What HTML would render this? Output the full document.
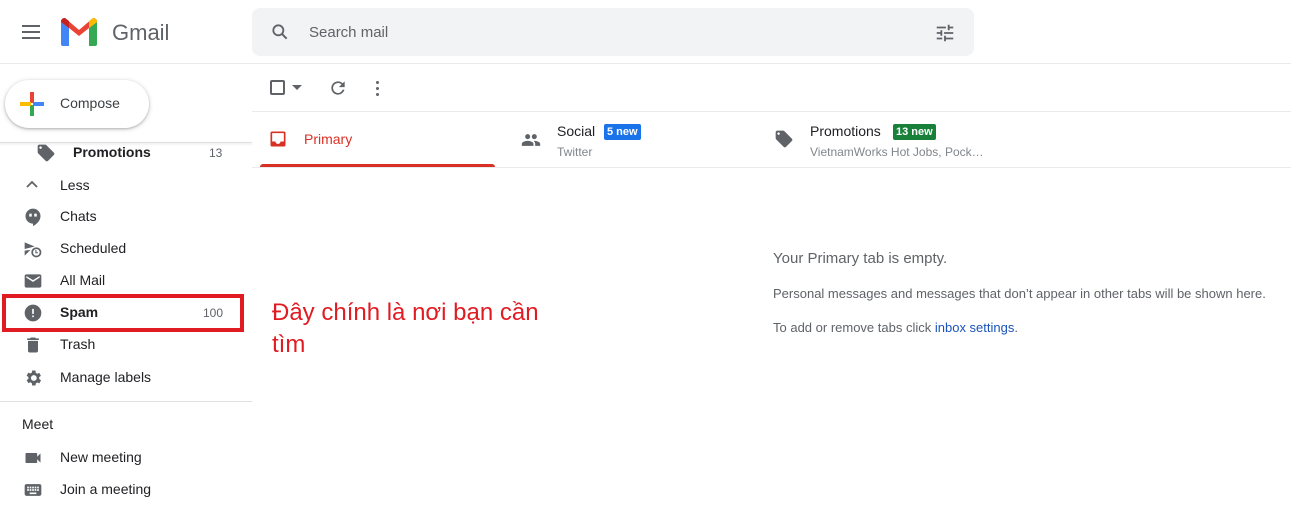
<!DOCTYPE html>
<html><head><meta charset="utf-8"><style>
*{margin:0;padding:0;box-sizing:border-box}
body{width:1291px;height:506px;overflow:hidden;background:#fff;font-family:"Liberation Sans",Arial,sans-serif;color:#202124;position:relative}
.a{position:absolute}
.nav{font-size:14px;color:#202124;left:60px}
.ic{position:absolute;left:23px}
</style></head><body>
<!-- header -->
<div class="a" style="left:22px;top:25px;width:18px;height:2px;background:#5f6368;box-shadow:0 6px 0 #5f6368,0 12px 0 #5f6368"></div>
<svg class="a" style="left:61px;top:18px" width="36" height="28" viewBox="0 0 36 28">
<path d="M0 4 L0 26 Q0 28 2 28 L8 28 L8 10 Z" fill="#4285f4"/>
<path d="M28 10 L28 28 L34 28 Q36 28 36 26 L36 4 Z" fill="#34a853"/>
<path d="M0 4 Q0 0 4 0 L18 12 L32 0 Q36 0 36 4 L28 10 L18 18 L8 10 Z" fill="#ea4335"/>
<path d="M28 10 L36 4 Q36 0 32 0 L28 3Z" fill="#fbbc04"/>
<path d="M0 4 L8 10 L8 3 L4 0 Q0 0 0 4Z" fill="#c5221f"/>
</svg>
<div class="a" style="left:112px;top:20px;font-size:22px;color:#5f6368">Gmail</div>
<div class="a" style="left:252px;top:8px;width:722px;height:48px;background:#f1f3f4;border-radius:8px"></div>
<svg class="a" style="left:270px;top:22px" width="20" height="20" viewBox="0 0 24 24"><circle cx="10" cy="10" r="6" fill="none" stroke="#5f6368" stroke-width="2.2"/><path d="M14.5 14.5 L20 20" stroke="#5f6368" stroke-width="2.4"/></svg>
<div class="a" style="left:309px;top:24px;font-size:15px;color:#5f6368">Search mail</div>
<svg class="a" style="left:934px;top:22px" width="22" height="22" viewBox="0 0 24 24" fill="#5f6368"><path d="M3 17v2h6v-2H3zM3 5v2h10V5H3zm10 16v-2h8v-2h-8v-2h-2v6h2zM7 9v2H3v2h4v2h2V9H7zm14 4v-2H11v2h10zm-6-4h2V7h4V5h-4V3h-2v6z"/></svg>
<div class="a" style="left:0;top:63px;width:1291px;height:1px;background:#e8eaed"></div>
<!-- compose -->
<div class="a" style="left:5px;top:80px;width:144px;height:48px;border-radius:24px;background:#fff;box-shadow:0 1px 2px rgba(60,64,67,.3),0 1px 4px 1px rgba(60,64,67,.15)"></div>
<svg class="a" style="left:19px;top:91px" width="26" height="26" viewBox="0 0 26 26"><rect x="11" y="1" width="4" height="11" fill="#ea4335"/><rect x="11" y="14" width="4" height="11" fill="#34a853"/><rect x="1" y="11" width="11" height="4" fill="#fbbc04"/><rect x="14" y="11" width="11" height="4" fill="#4285f4"/></svg>
<div class="a" style="left:60px;top:95px;font-size:14px;color:#3c4043">Compose</div>
<div class="a" style="left:0;top:142px;width:252px;height:1px;background:#e0e0e0;box-shadow:0 1px 2px rgba(0,0,0,.15)"></div>
<!-- nav -->
<svg class="a" style="left:36px;top:143px" width="20" height="20" viewBox="0 0 24 24" fill="#5f6368"><path d="M21.4 11.6l-9-9C12.1 2.2 11.6 2 11 2H4c-1.1 0-2 .9-2 2v7c0 .6.2 1.1.6 1.4l9 9c.4.4.9.6 1.4.6s1-.2 1.4-.6l7-7c.4-.4.6-.9.6-1.4s-.2-1-.6-1.4zM5.5 7C4.7 7 4 6.3 4 5.5S4.7 4 5.5 4 7 4.7 7 5.5 6.3 7 5.5 7z"/></svg>
<div class="a" style="left:73px;top:144px;font-size:14px;font-weight:bold">Promotions</div>
<div class="a" style="left:209px;top:146px;font-size:12px;color:#5f6368">13</div>
<svg class="a" style="left:25px;top:179px" width="14" height="10" viewBox="0 0 14 10"><path d="M2 8 L7 3 L12 8" fill="none" stroke="#5f6368" stroke-width="1.8"/></svg>
<div class="a nav" style="top:177px">Less</div>
<svg class="ic" style="top:207px" width="20" height="20" viewBox="0 0 24 24" fill="#5f6368"><path d="M12 2a9 9 0 0 0-9 9c0 5 4 9 9 9v3c5-2.5 9-7 9-12a9 9 0 0 0-9-9z"/><rect x="7.5" y="8" width="3" height="3.5" fill="#fff"/><rect x="13.5" y="8" width="3" height="3.5" fill="#fff"/></svg>
<div class="a nav" style="top:208px">Chats</div>
<svg class="ic" style="top:239px" width="20" height="20" viewBox="0 0 24 24" fill="#5f6368"><path d="M2 4 L14 9 L2 12Z"/><circle cx="16" cy="16" r="6"/><circle cx="16" cy="16" r="4" fill="#fff"/><path d="M15.5 13v3.5h2.5" stroke="#5f6368" stroke-width="1.3" fill="none"/><path d="M2 14 L9 13 L2 20Z"/></svg>
<div class="a nav" style="top:240px">Scheduled</div>
<svg class="ic" style="top:271px" width="20" height="20" viewBox="0 0 24 24" fill="#5f6368"><path d="M20 4H4c-1.1 0-2 .9-2 2v12c0 1.1.9 2 2 2h16c1.1 0 2-.9 2-2V6c0-1.1-.9-2-2-2zm0 4l-8 5-8-5V6l8 5 8-5v2z"/></svg>
<div class="a nav" style="top:272px">All Mail</div>
<svg class="ic" style="top:303px" width="20" height="20" viewBox="0 0 24 24" fill="#5f6368"><path d="M12 2a10 10 0 1 0 0 20 10 10 0 0 0 0-20zm1 15h-2v-2h2v2zm0-4h-2V7h2v6z"/></svg>
<div class="a nav" style="top:304px;font-weight:bold">Spam</div>
<div class="a" style="left:203px;top:306px;font-size:12px;color:#5f6368">100</div>
<div class="a" style="left:2px;top:294px;width:242px;height:38px;border:4px solid #e11b22"></div>
<svg class="ic" style="top:335px" width="20" height="20" viewBox="0 0 24 24" fill="#5f6368"><path d="M6 19c0 1.1.9 2 2 2h8c1.1 0 2-.9 2-2V7H6v12zM19 4h-3.5l-1-1h-5l-1 1H5v2h14V4z"/></svg>
<div class="a nav" style="top:336px">Trash</div>
<svg class="ic" style="top:368px" width="20" height="20" viewBox="0 0 24 24" fill="#5f6368"><path d="M19.4 13a7.5 7.5 0 0 0 0-2l2.1-1.6-2-3.5-2.5 1a7.3 7.3 0 0 0-1.7-1L15 3h-4l-.4 2.6a7.3 7.3 0 0 0-1.7 1l-2.5-1-2 3.5L6.5 11a7.5 7.5 0 0 0 0 2l-2.1 1.6 2 3.5 2.5-1c.5.4 1.1.7 1.7 1L11 21h4l.4-2.6c.6-.3 1.2-.6 1.7-1l2.5 1 2-3.5L19.4 13zM13 15.5a3.5 3.5 0 1 1 0-7 3.5 3.5 0 0 1 0 7z"/></svg>
<div class="a nav" style="top:369px">Manage labels</div>
<div class="a" style="left:0;top:401px;width:252px;height:1px;background:#e0e0e0"></div>
<div class="a" style="left:22px;top:416px;font-size:14px">Meet</div>
<svg class="ic" style="top:448px" width="20" height="20" viewBox="0 0 24 24" fill="#5f6368"><path d="M17 10.5V7c0-.6-.4-1-1-1H4c-.6 0-1 .4-1 1v10c0 .6.4 1 1 1h12c.6 0 1-.4 1-1v-3.5l4 4v-11l-4 4z"/></svg>
<div class="a nav" style="top:449px">New meeting</div>
<svg class="ic" style="top:480px" width="20" height="20" viewBox="0 0 24 24" fill="#5f6368"><path d="M20 5H4c-1.1 0-2 .9-2 2v10c0 1.1.9 2 2 2h16c1.1 0 2-.9 2-2V7c0-1.1-.9-2-2-2zm-9 3h2v2h-2V8zm0 3h2v2h-2v-2zM8 8h2v2H8V8zm0 3h2v2H8v-2zm-1 2H5v-2h2v2zm0-3H5V8h2v2zm9 7H8v-2h8v2zm0-4h-2v-2h2v2zm0-3h-2V8h2v2zm3 3h-2v-2h2v2zm0-3h-2V8h2v2z"/></svg>
<div class="a nav" style="top:481px">Join a meeting</div>
<!-- annotation -->
<div class="a" style="left:272px;top:297px;font-size:24px;line-height:32px;color:#e11b22;font-family:'Liberation Sans','DejaVu Sans',sans-serif">Đây chính là nơi bạn cần<br>tìm</div>
<!-- toolbar -->
<div class="a" style="left:270px;top:80px;width:15px;height:15px;border:2px solid #5f6368;border-radius:2px"></div>
<svg class="a" style="left:292px;top:85px" width="10" height="6"><path d="M0 0 L10 0 L5 5Z" fill="#5f6368"/></svg>
<svg class="a" style="left:328px;top:78px" width="20" height="20" viewBox="0 0 24 24" fill="#5f6368"><path d="M17.65 6.35A7.958 7.958 0 0 0 12 4a8 8 0 1 0 7.73 10h-2.08A6 6 0 1 1 12 6c1.66 0 3.14.69 4.22 1.78L13 11h7V4l-2.35 2.35z"/></svg>
<div class="a" style="left:376px;top:81px;width:3px;height:3px;background:#5f6368;border-radius:50%;box-shadow:0 6px 0 #5f6368,0 12px 0 #5f6368"></div>
<div class="a" style="left:252px;top:111px;width:1039px;height:1px;background:#e8eaed"></div>
<!-- tabs -->
<svg class="a" style="left:268px;top:129px" width="20" height="20" viewBox="0 0 24 24" fill="#d93025"><path d="M19 3H5a2 2 0 0 0-2 2v14a2 2 0 0 0 2 2h14a2 2 0 0 0 2-2V5a2 2 0 0 0-2-2zm0 12h-4a3 3 0 0 1-6 0H5V5h14v10z"/></svg>
<div class="a" style="left:304px;top:131px;font-size:14px;color:#d93025">Primary</div>
<div class="a" style="left:260px;top:164px;width:235px;height:4px;background:#d93025;border-radius:3px 3px 0 0"></div>
<svg class="a" style="left:520px;top:130px" width="22" height="20" viewBox="0 0 24 24" fill="#5f6368"><path d="M16 11c1.66 0 2.99-1.34 2.99-3S17.66 5 16 5s-3 1.34-3 3 1.34 3 3 3zm-8 0c1.66 0 2.99-1.34 2.99-3S9.66 5 8 5 5 6.34 5 8s1.34 3 3 3zm0 2c-2.33 0-7 1.17-7 3.5V19h14v-2.5C15 14.17 10.33 13 8 13zm8 0c-.29 0-.62.02-.97.05 1.16.84 1.97 1.97 1.97 3.45V19h6v-2.5c0-2.33-4.67-3.5-7-3.5z"/></svg>
<div class="a" style="left:557px;top:123px;font-size:14px;color:#202124">Social</div>
<div class="a" style="left:604px;top:124px;background:#1a73e8;color:#fff;font-size:11px;font-weight:bold;padding:1px 3px;border-radius:2px;line-height:14px">5 new</div>
<div class="a" style="left:557px;top:145px;font-size:12px;color:#80868b">Twitter</div>
<svg class="a" style="left:774px;top:129px" width="20" height="20" viewBox="0 0 24 24" fill="#5f6368"><path d="M21.4 11.6l-9-9C12.1 2.2 11.6 2 11 2H4c-1.1 0-2 .9-2 2v7c0 .6.2 1.1.6 1.4l9 9c.4.4.9.6 1.4.6s1-.2 1.4-.6l7-7c.4-.4.6-.9.6-1.4s-.2-1-.6-1.4zM5.5 7C4.7 7 4 6.3 4 5.5S4.7 4 5.5 4 7 4.7 7 5.5 6.3 7 5.5 7z"/></svg>
<div class="a" style="left:810px;top:123px;font-size:14px;color:#202124">Promotions</div>
<div class="a" style="left:893px;top:124px;background:#188038;color:#fff;font-size:11px;font-weight:bold;padding:1px 3px;border-radius:2px;line-height:14px">13 new</div>
<div class="a" style="left:810px;top:145px;font-size:12px;color:#80868b">VietnamWorks Hot Jobs, Pock…</div>
<div class="a" style="left:252px;top:167px;width:1039px;height:1px;background:#e8eaed"></div>
<!-- empty -->
<div class="a" style="left:773px;top:250px;font-size:15px;color:#5f6368">Your Primary tab is empty.</div>
<div class="a" style="left:773px;top:286px;font-size:13px;color:#5f6368;white-space:nowrap">Personal messages and messages that don’t appear in other tabs will be shown here.</div>
<div class="a" style="left:773px;top:320px;font-size:13px;color:#5f6368">To add or remove tabs click <span style="color:#1a54b8">inbox settings</span>.</div>
</body></html>
